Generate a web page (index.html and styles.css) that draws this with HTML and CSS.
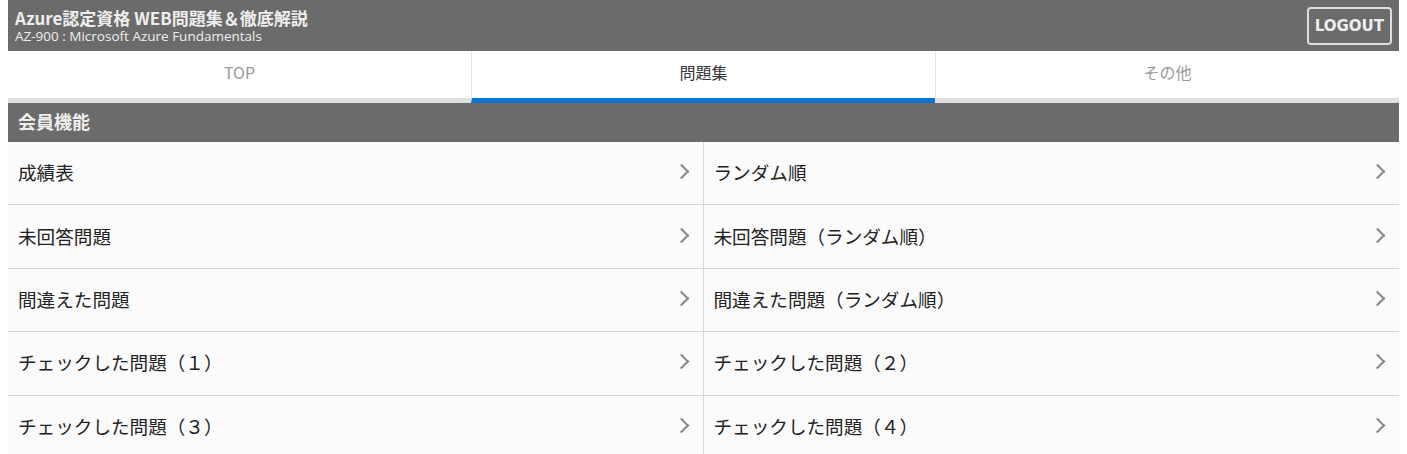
FILE: index.html
```html
<!DOCTYPE html>
<html>
<head lang="ja">
    <meta charset="UTF-8">
    <title>Azure認定資格 WEB問題集&amp;徹底解説</title>
    <link rel="stylesheet" href="styles.css">
</head>
<body>

<header class="top">
    <div class="brand">
        <h1>Azure認定資格 WEB問題集＆徹底解説</h1>
        <p>AZ-900 : Microsoft Azure Fundamentals</p>
    </div>
    <a class="logout" href="#">LOGOUT</a>
</header>

<nav class="tabs">
    <a class="tab" href="#">TOP</a>
    <a class="tab active" href="#">問題集</a>
    <a class="tab" href="#">その他</a>
</nav>

<h2 class="section">会員機能</h2>

<ul class="menu">
    <li><a href="#">成績表</a></li>
    <li><a href="#">ランダム順</a></li>
    <li><a href="#">未回答問題</a></li>
    <li><a href="#">未回答問題（ランダム順）</a></li>
    <li><a href="#">間違えた問題</a></li>
    <li><a href="#">間違えた問題（ランダム順）</a></li>
    <li><a href="#">チェックした問題（１）</a></li>
    <li><a href="#">チェックした問題（２）</a></li>
    <li><a href="#">チェックした問題（３）</a></li>
    <li><a href="#">チェックした問題（４）</a></li>
</ul>

</body>
</html>
```

FILE: styles.css
```css
* {
    box-sizing: border-box;
}
body {
    margin: 0 8px;
    font-family: "Noto Sans CJK JP", "Noto Sans", sans-serif;
    color: #222;
    background-color: #fff;
}
a {
    text-decoration: none;
    color: inherit;
}
.top {
    display: flex;
    justify-content: space-between;
    align-items: center;
    height: 51px;
    padding: 0 7px;
    background-color: #6b6b6b;
    color: #eee;
}
.brand h1 {
    margin: 0;
    font-size: 17px;
    line-height: 19px;
    font-weight: bold;
}
.brand p {
    margin: 1px 0 0;
    font-family: "Open Sans", "Noto Sans CJK JP", sans-serif;
    font-size: 13.5px;
    line-height: 16px;
}
.logout {
    padding: 0 6px;
    height: 38px;
    line-height: 34px;
    border: 2px solid #ddd;
    border-radius: 4px;
    font-family: "DejaVu Sans", sans-serif;
    font-size: 15px;
    font-weight: bold;
    color: #eee;
}
.tabs {
    display: flex;
}
.tab {
    flex: 1;
    height: 52px;
    line-height: 43px;
    text-align: center;
    font-size: 16px;
    color: #999;
    border-bottom: 5px solid #e0e0e0;
}
.tab + .tab {
    border-left: 1px solid #e4e4e4;
}
.tab.active {
    color: #333;
    border-bottom-color: #0a74d0;
}
.section {
    margin: 0;
    height: 39px;
    line-height: 37px;
    padding: 0 10px;
    background-color: #6b6b6b;
    color: #eee;
    font-size: 18px;
    font-weight: bold;
}
.menu {
    display: grid;
    grid-template-columns: 1fr 1fr;
    margin: 0;
    padding: 0;
    list-style: none;
}
.menu li {
    border-bottom: 1px solid #d8d8d8;
    background-color: #fbfbfb;
}
.menu li:nth-child(odd) {
    border-right: 1px solid #d8d8d8;
}
.menu a {
    display: flex;
    justify-content: space-between;
    align-items: center;
    height: 62.4px;
    padding: 0 14px 3px 10px;
    font-size: 18.6px;
}
.menu a::after {
    content: "";
    width: 9px;
    height: 9px;
    margin-right: 2px;
    border-top: 2px solid #8e8484;
    border-right: 2px solid #8e8484;
    transform: rotate(45deg);
}
```
